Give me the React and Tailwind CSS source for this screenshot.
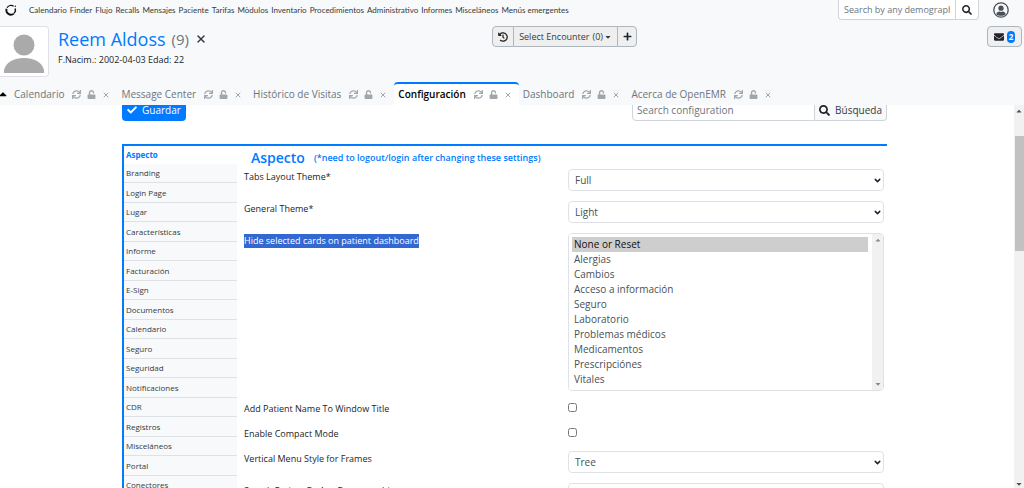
import React from 'react';
import { FaSync, FaUnlock, FaHistory, FaPlus, FaEnvelope, FaCheck, FaSearch, FaCaretDown, FaCaretUp } from 'react-icons/fa';
import { ChevronDown, X } from 'lucide-react';

const menuItems = [
  'Calendario', 'Finder', 'Flujo', 'Recalls', 'Mensajes', 'Paciente', 'Tarifas', 'Mòdulos', 'Inventario',
  'Procedimientos', 'Administrativo', 'Informes', 'Misceláneos', 'Menús emergentes',
];

const tabs = ['Calendario', 'Message Center', 'Histórico de Visitas', 'Configuración', 'Dashboard', 'Acerca de OpenEMR'];
const activeTab = 'Configuración';

const sections = [
  'Branding', 'Login Page', 'Lugar', 'Características', 'Informe', 'Facturación', 'E-Sign', 'Documentos',
  'Calendario', 'Seguro', 'Seguridad', 'Notificaciones', 'CDR', 'Registros', 'Misceláneos', 'Portal', 'Conectores',
];

const cards = [
  'None or Reset', 'Alergias', 'Cambios', 'Acceso a información', 'Seguro', 'Laboratorio',
  'Problemas médicos', 'Medicamentos', 'Prescripciónes', 'Vitales',
];

const Logo = () => (
  <svg viewBox="0 0 12 12" className="w-3 h-3" fill="none" stroke="#111" strokeWidth="1.5">
    <path d="M2 3.800A4.500 4.500 0 0 1 8.600 2.200" strokeWidth="1.200" />
    <path d="M10.200 4.600A4.500 4.500 0 0 1 9.200 9.200" />
    <path d="M8.800 9.600A4.500 4.500 0 0 1 1.600 4.800" strokeWidth="1.900" />
    <circle cx="10.300" cy="2.300" r="0.700" fill="#111" stroke="none" />
  </svg>
);

const Avatar = () => (
  <svg viewBox="0 0 40 40" className="w-10 h-10" fill="#aaaaaa">
    <circle cx="20" cy="12" r="10.500" />
    <path d="M0 40V37C2 29 10 25 20 25S38 29 40 37V40Z" />
  </svg>
);

const UserIcon = () => (
  <svg viewBox="0 0 16 16" className="w-4 h-4">
    <circle cx="8" cy="8" r="7.200" fill="none" stroke="#495057" strokeWidth="1.300" />
    <circle cx="8" cy="6.200" r="2.600" fill="#495057" />
    <path d="M3.300 12.300C3.600 10.400 5 9.600 6.300 9.600C7.400 10.100 8.600 10.100 9.700 9.600C11 9.600 12.400 10.400 12.700 12.300C10.300 14.400 5.700 14.400 3.300 12.300Z" fill="#495057" />
  </svg>
);

const TopMenu = () => (
  <div className="flex items-start justify-between h-5">
    <div className="flex items-center h-5 pl-[5px]">
      <Logo />
      <nav className="flex gap-[3px] ml-3 font-['Lato','Open_Sans',sans-serif] text-[8px] text-[#343a40]">
        {menuItems.map(item => <a key={item} href="#" className="whitespace-nowrap">{item}</a>)}
      </nav>
    </div>
    <div className="flex items-center pr-[15px]">
      <div className="flex h-5 mr-[14px]">
        <input
          type="text"
          aria-label="Search by any demographics"
          placeholder="Search by any demographics"
          className="w-[118px] px-[5px] text-[9px] bg-white border border-t-0 border-[#ced4da] rounded-bl-sm placeholder:text-[#6c757d]"
        />
        <button aria-label="Search" className="w-[23px] flex items-center justify-center bg-white border border-l-0 border-t-0 border-[#ced4da] rounded-br-sm text-[#212529]">
          <FaSearch size={10} />
        </button>
      </div>
      <button aria-label="User"><UserIcon /></button>
    </div>
  </div>
);

const PatientBar = () => (
  <div className="flex items-start justify-between pt-[6px] h-[62px]">
    <div className="flex">
      <div className="flex items-end justify-center w-[49px] h-[51px] pb-[3px] bg-white border border-l-0 border-[#dee2e6] rounded-r-sm">
        <Avatar />
      </div>
      <div className="ml-[9px]">
        <div className="flex items-center h-[26px]">
          <a href="#" className="text-[18px] font-medium text-[#007bff]">Reem Aldoss</a>
          <span className="ml-[6px] text-[15px] text-[#6c757d]">(9)</span>
          <button aria-label="Close patient" className="ml-[6px] text-[#343a40]"><X size={12} strokeWidth={3} /></button>
        </div>
        <div className="text-[9px] leading-4 text-[#212529]">F.Nacim.: 2002-04-03 Edad: 22</div>
      </div>
    </div>
    <div className="flex h-[21px] ml-auto mr-[350px] text-[9px] text-[#343a40]">
      <button aria-label="History" className="w-[22px] flex items-center justify-center bg-[#efefef] border border-[#adb5bd] rounded-l-sm text-[#212529]"><FaHistory size={10} /></button>
      <button className="flex items-center px-[5px] bg-[#efefef] border-y border-[#adb5bd] whitespace-nowrap">
        Select Encounter <span className="ml-[3px]">(0)</span><FaCaretDown size={8} className="ml-px" />
      </button>
      <button aria-label="New encounter" className="w-5 flex items-center justify-center bg-[#efefef] border border-[#adb5bd] rounded-r-sm text-[#212529]"><FaPlus size={9} /></button>
    </div>
    <button aria-label="Messages" className="flex items-center justify-center gap-[3px] w-[35px] h-[21px] mr-[2px] bg-[#efefef] border border-[#adb5bd] rounded-sm text-[#212529]">
      <FaEnvelope size={10} />
      <span className="px-[2px] text-[8px] leading-3 font-bold text-white bg-[#007bff] rounded-sm">2</span>
    </button>
  </div>
);

const TabBar = () => (
  <div className="flex items-end h-[23px]">
    <button aria-label="Collapse" className="w-[10px] h-[23px] text-black"><FaCaretUp size={12} className="-ml-[3px]" /></button>
    {tabs.map(tab => (
      <div
        key={tab}
        className={`flex items-center h-[23px] px-1 border-t-2 whitespace-nowrap ${
          tab === activeTab ? 'bg-white border-[#007bff] rounded-t-sm' : 'border-transparent'
        }`}
      >
        <a href="#" className={tab === activeTab ? 'text-[10px] font-semibold text-black' : 'text-[10px] text-[#6c757d]'}>{tab}</a>
        <span className="flex items-center gap-[6px] ml-2 mr-[3px] text-[#a0a6ac]">
          <button aria-label={`Refresh ${tab}`}><FaSync size={9} /></button>
          <button aria-label={`Lock ${tab}`}><FaUnlock size={9} /></button>
          <button aria-label={`Close ${tab}`}><X size={8} strokeWidth={3} /></button>
        </span>
      </div>
    ))}
  </div>
);

const Row = ({ id, label, selected, children }) => (
  <div className="flex items-start">
    <div className="w-[324px] shrink-0 pt-px text-[9px] leading-[14px] text-[#212529]">
      <label htmlFor={id} className={selected ? 'inline-block bg-[#3367d1] text-white' : ''}>{label}</label>
    </div>
    <div className="flex-1">{children}</div>
  </div>
);

const SelectBox = ({ id, value }) => (
  <div className="relative">
    <select id={id} className="block appearance-none w-full h-[22px] px-[6px] text-[10px] text-[#495057] bg-white border border-[#dee2e6] rounded-sm">
      <option>{value}</option>
    </select>
    <ChevronDown size={9} strokeWidth={4} className="absolute right-[2px] top-[7px] text-[#212529] pointer-events-none" />
  </div>
);

const Sidebar = () => (
  <nav className="w-[115px] shrink-0 border-l-2 border-[#007bff] text-[8px] text-[#343a40]">
    <a href="#" className="block h-[18px] pl-[2px] leading-[17px] font-bold text-[#007bff]">Aspecto</a>
    <ul>
      {sections.map(name => (
        <li key={name} className="flex items-center odd:h-[19px] even:h-5 pl-[2px] bg-[#f8f9fa] border-b border-[#dee2e6]">
          <a href="#">{name}</a>
        </li>
      ))}
    </ul>
  </nav>
);

const Settings = () => (
  <form className="flex-1 pl-[7px] pr-[3px]">
    <div className="flex items-center h-[23px] gap-[9px] pl-[7px] text-[#007bff]">
      <h2 className="text-[14px] font-semibold">Aspecto</h2>
      <span className="text-[9px] font-semibold">(*need to logout/login after changing these settings)</span>
    </div>
    <div className="flex flex-col gap-[10px]">
      <Row id="tabs-theme" label="Tabs Layout Theme*"><SelectBox id="tabs-theme" value="Full" /></Row>
      <Row id="general-theme" label="General Theme*"><SelectBox id="general-theme" value="Light" /></Row>
      <Row id="cards" label="Hide selected cards on patient dashboard" selected>
        <div className="flex h-[158px] border border-[#dee2e6] rounded-sm overflow-hidden">
          <select id="cards" multiple size={10} defaultValue={['None or Reset']} className="flex-1 h-[156px] pt-[3px] pl-[3px] pr-1 text-[10px] text-[#495057] bg-white overflow-hidden">
            {cards.map(card => <option key={card} className="h-[15px] min-h-0 px-[2px] py-0 leading-[15px]">{card}</option>)}
          </select>
          <div className="flex flex-col items-center justify-between w-[11px] py-[2px] bg-[#f1f1f1] text-[#8b8b8b]">
            <FaCaretUp size={8} />
            <FaCaretDown size={8} />
          </div>
        </div>
      </Row>
      <Row id="window-title" label="Add Patient Name To Window Title"><input id="window-title" type="checkbox" className="block w-[9px] h-[9px] mt-[2px] mb-1" /></Row>
      <Row id="compact" label="Enable Compact Mode"><input id="compact" type="checkbox" className="block w-[9px] h-[9px] mt-[2px] mb-1" /></Row>
      <Row id="menu-style" label="Vertical Menu Style for Frames"><SelectBox id="menu-style" value="Tree" /></Row>
      <Row id="any-patient" label="Search Patient By Any Demographics"><SelectBox id="any-patient" value="Dual" /></Row>
    </div>
  </form>
);

const App = () => {
  return (
    <div className="flex flex-col h-screen overflow-hidden bg-white font-['Open_Sans','Noto_Sans',sans-serif]">
      <header className="shrink-0 bg-[#f8f9fa]">
        <TopMenu />
        <PatientBar />
        <TabBar />
      </header>
      <main className="flex flex-1 min-h-0">
        <div className="flex-1 overflow-hidden pr-[5px]">
          <div className="max-w-[765px] mx-auto">
            <div className="flex justify-between h-[22px] -mt-[6px]">
              <button className="flex items-center gap-[5px] px-[5px] text-[10px] text-white bg-[#007bff] rounded-sm">
                <FaCheck size={10} /> Guardar
              </button>
              <div className="flex">
                <input
                  type="text"
                  aria-label="Search configuration"
                  placeholder="Search configuration"
                  className="w-[183px] px-1 text-[10px] bg-white border border-[#ced4da] rounded-l-sm placeholder:text-[#6c757d]"
                />
                <button className="flex items-center gap-[5px] px-1 text-[10px] text-[#343a40] bg-[#f8f9fa] border border-l-0 border-[#ced4da] rounded-r-sm">
                  <FaSearch size={11} className="text-[#212529]" /> Búsqueda
                </button>
              </div>
            </div>
            <div className="flex mt-[23px] border-t-2 border-[#007bff]">
              <Sidebar />
              <Settings />
            </div>
          </div>
        </div>
        <div className="flex flex-col items-center w-[10px] shrink-0 bg-[#f1f1f1] text-[#505050]">
          <FaCaretUp size={8} className="mt-[2px] shrink-0" />
          <div className="w-[9px] h-[115px] mt-[21px] shrink-0 bg-[#c1c1c1]" />
          <FaCaretDown size={8} className="mt-auto shrink-0" />
        </div>
      </main>
    </div>
  );
};

export default App;
